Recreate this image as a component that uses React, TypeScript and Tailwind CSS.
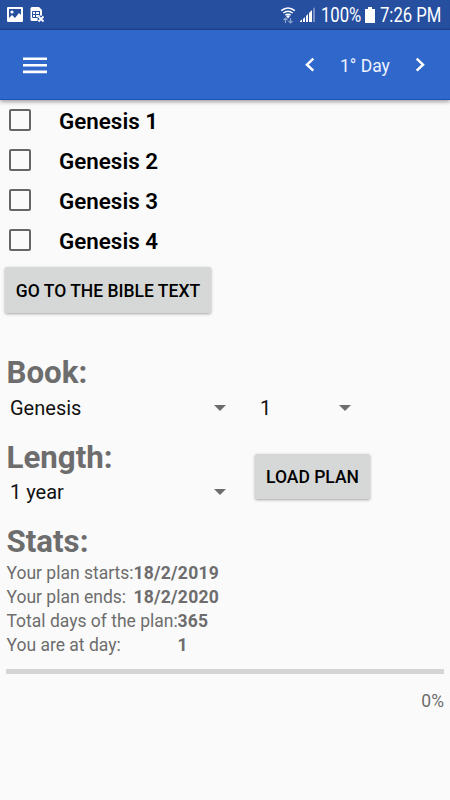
import React from "react";

function StatusBar() {
  return (
    <div className="flex h-[30px] items-center bg-[#264f9f] text-white shadow-[inset_0_-1px_1px_rgba(20,45,110,0.45)]">
      <svg className="ml-[7px] h-[16px] w-[16px]" viewBox="0 0 16 16">
        <path fill="#fff" fillRule="evenodd" d="M1 0h14a1 1 0 0 1 1 1v13a1 1 0 0 1-1 1H1a1 1 0 0 1-1-1V1a1 1 0 0 1 1-1zM2 2v9l3-3 3 3 4-5 2 2V2z" />
        <circle cx="5" cy="5" r="1.6" fill="#fff" />
      </svg>
      <svg className="ml-[7px] h-[16px] w-[15px]" viewBox="0 0 15 16">
        <path fill="#fff" d="M2 0h7l3 3v11H2a1.500 1.500 0 0 1-1.500-1.500v-11A1.500 1.500 0 0 1 2 0Z" />
        <path stroke="#264f9f" strokeWidth="1" fill="none" d="M2.500 4.500h7M2.500 7.500h7M2.500 10.500h5M2.500 4.500v6M5.500 4.500v6M9.500 4v4" />
        <path stroke="#264f9f" strokeWidth="4" d="m8.500 9.500 5 5m0-5-5 5" />
        <path stroke="#fff" strokeWidth="1.800" d="m8.500 9.500 5 5m0-5-5 5" />
      </svg>
      <div className="flex-1" />
      <svg className="h-[18px] w-[16px]" viewBox="0 0 16 18">
        <g fill="none" stroke="#fff" strokeWidth="1.500">
          <path d="M1.200 4.600Q8 -.8 14.800 4.600M3.300 7Q8 3.300 12.700 7M5.400 9.200Q8 7.200 10.600 9.200" />
        </g>
        <path fill="#fff" d="m6 10 2 2.500L10 10Q8 8.500 6 10" />
        <path d="M5.500 17v-5m-2 2 2-2 2 2M10.500 12v5m-2-2 2 2 2-2" fill="none" stroke="#8ca3d0" strokeWidth="1.200" />
      </svg>
      <svg className="ml-[4px] h-[16px] w-[15px]" viewBox="0 0 15 16">
        <path fill="#fff" d="M0 15v-1l2-1.500V15zM3 15v-3l2-2v5zM6 15V9l2-2v8zM9 15V6l3-3v12z" />
        <path fill="#7890c5" d="M13 15V2l2-2v15z" />
      </svg>
      <div className="ml-[6px] w-[40px] whitespace-nowrap pt-[2px] text-[19.500px] leading-[30px]">
        <span className="inline-block origin-left scale-x-[0.855]">100%</span>
      </div>
      <svg className="ml-[4px] h-[16px] w-[10px]" viewBox="0 0 10 16">
        <path fill="#fff" d="M3 0h4v2h3v14H0V2h3z" />
      </svg>
      <div className="ml-[5px] w-[70px] whitespace-nowrap pt-[2px] text-[19.500px] leading-[30px]">
        <span className="inline-block origin-left scale-x-[0.855]">7:26 PM</span>
      </div>
    </div>
  );
}

function Toolbar() {
  return (
    <header className="relative z-10 flex h-[70px] items-center border-b border-[#1754b5] bg-[#3067cb] text-white shadow-[0_2px_4px_rgba(0,0,0,0.35)]">
      <button className="mt-px ml-[23px] w-[24px]" aria-label="Menu">
        <svg className="block h-[17px] w-[24px]" viewBox="0 0 24 17">
          <path fill="#fff" d="M0 .4h24V3H0zM0 7h24v2.600H0zM0 13.600h24v2.600H0z" />
        </svg>
      </button>
      <div className="flex-1" />
      <svg className="mt-px h-[16px] w-[10px]" viewBox="0 0 10 16">
        <path d="m8.300 1.700-6.300 6 6.300 6" fill="none" stroke="#fff" strokeWidth="2.500" />
      </svg>
      <span className="mt-[4px] ml-[25px] w-[52px] whitespace-nowrap text-[17.500px] text-[#edf2ff]">1° Day</span>
      <svg className="mt-px mr-[25px] ml-[23px] h-[16px] w-[10px]" viewBox="0 0 10 16">
        <path d="m1.700 1.700 6.300 6-6.300 6" fill="none" stroke="#fff" strokeWidth="2.500" />
      </svg>
    </header>
  );
}

function Chapter({ label }: { label: string }) {
  return (
    <label className="flex h-[40px] items-center">
      <span className="ml-[9px] h-[22px] w-[22px] rounded-[2px] border-2 border-[#666]" />
      <span className="ml-[28px] pt-[2px] text-[22.400px] leading-[38px] font-semibold text-black">{label}</span>
    </label>
  );
}

function Spinner({ value, narrow }: { value: string; narrow?: boolean }) {
  return (
    <div className={`flex h-[30px] items-center justify-between text-[20px] text-[#111] ${narrow ? "w-[91px]" : "w-[216px]"}`}>
      <span>{value}</span>
      <svg className="h-[6px] w-[12px]" viewBox="0 0 12 6"><path fill="#6d6d6d" d="M0 0h12L6 6z" /></svg>
    </div>
  );
}

const headingClass = "ml-[6.5px] h-[36px] text-[31.250px] leading-[38px] font-bold text-[#6d6d6d]";
const buttonClass = "rounded-[2px] bg-[#d6d8d7] pt-[2px] text-center text-[17.500px] font-medium whitespace-nowrap text-black shadow-[0_1px_3px_rgba(0,0,0,0.35)]";

const stats = [
  { label: "Your plan starts:", value: "18/2/2019", width: "w-[127px]" },
  { label: "Your plan ends:", value: "18/2/2020", width: "w-[127px]" },
  { label: "Total days of the plan:", value: "365", width: "w-[171px]" },
  { label: "You are at day:", value: "1", width: "w-[171px]" },
];

export default function App() {
  return (
    <div className="h-[800px] w-[450px] overflow-hidden bg-[#fafafa] font-[Roboto,sans-serif]">
      <StatusBar />
      <Toolbar />
      <main>
        {["Genesis 1", "Genesis 2", "Genesis 3", "Genesis 4"].map((c) => <Chapter key={c} label={c} />)}
        <button className={`mt-[7px] ml-[5px] block h-[46px] w-[206px] ${buttonClass}`}>GO TO THE BIBLE TEXT</button>
        <h2 className={`mt-[41px] ${headingClass}`}>Book:</h2>
        <div className="mt-[3px] ml-[10px] flex gap-[34px]">
          <Spinner value="Genesis" />
          <Spinner value="1" narrow />
        </div>
        <div className="flex">
          <div className="w-[255px]">
            <h2 className={`mt-[16px] ${headingClass}`}>Length:</h2>
            <div className="mt-[2px] ml-[10px]"><Spinner value="1 year" /></div>
          </div>
          <button className={`mt-[31px] h-[45px] w-[115px] ${buttonClass}`}>LOAD PLAN</button>
        </div>
        <h2 className={`mt-[16px] ${headingClass}`}>Stats:</h2>
        <dl className="mt-[2.4px] ml-[6.5px] text-[17.500px] leading-[24px] text-[#6d6d6d]">
          {stats.map((s) => (
            <div key={s.label} className="flex h-[23.900px] whitespace-nowrap">
              <dt className={s.width}>{s.label}</dt>
              <dd className="font-bold tracking-[0.25px]">{s.value}</dd>
            </div>
          ))}
        </dl>
        <div className="mx-[6px] mt-[12px] h-[5px] bg-[#d5d5d5]" />
        <div className="mt-[15px] mr-[6px] text-right text-[17.500px] leading-[24px] text-[#6d6d6d]">0%</div>
      </main>
    </div>
  );
}
